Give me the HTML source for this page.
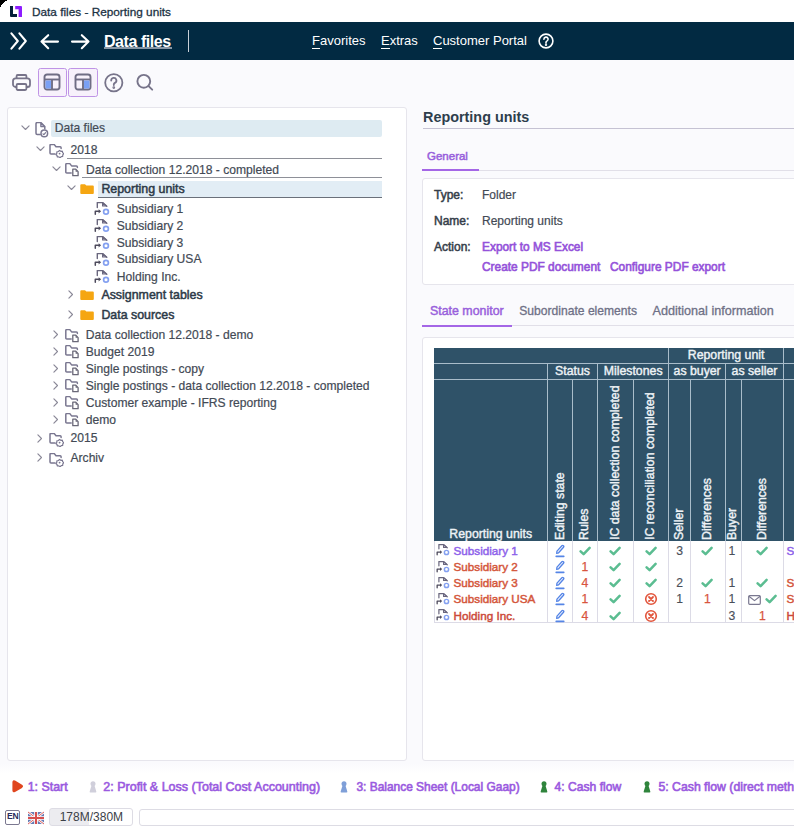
<!DOCTYPE html>
<html><head><meta charset="utf-8">
<style>
*{box-sizing:border-box;margin:0;padding:0}
html,body{width:794px;height:832px;overflow:hidden;background:#000}
body{font-family:"Liberation Sans",sans-serif;position:relative}
#win{position:absolute;left:0;top:0;width:794px;height:832px;background:#fafafd;overflow:hidden}
.a{position:absolute;white-space:nowrap}
svg{position:absolute;overflow:visible}
#titlebar{left:0;top:0;width:794px;height:22px;background:#fff}
#nav{left:0;top:22px;width:794px;height:38px;background:#022a42}
.navt{color:#fff;font-size:13px;line-height:16px;top:33px}
.navt u{text-decoration:none;border-bottom:1px solid #fff}
.panel{background:#fff;border:1px solid #e6e5ec;border-radius:3px}
.m{-webkit-text-stroke:0.3px currentColor}
.tr{font-size:12.1px;color:#434a55;-webkit-text-stroke:0.2px currentColor;line-height:17px;height:17px}
.trb{font-size:12.4px;color:#2d3a48;-webkit-text-stroke:0.5px currentColor;line-height:17px;height:17px}
.hl{background:#deebf2}
.ul{border-bottom:1px solid #7c8088}
.lbl{font-size:12px;color:#363e4a;-webkit-text-stroke:0.5px currentColor}
.val{font-size:12px;color:#434a55;-webkit-text-stroke:0.2px currentColor}
.lnk{font-size:11.9px;color:#9452da;-webkit-text-stroke:0.6px currentColor}
.tab{font-size:12.4px;color:#6e7086;-webkit-text-stroke:0.3px currentColor}
.th{background:#2f5268;color:#eef3f6;font-size:12.3px;-webkit-text-stroke:0.4px currentColor}
.vl{position:absolute;width:1px;background:#a9bdca}
.hln{position:absolute;height:1px;background:#a9bdca}
.rot{position:absolute;transform-origin:0 0;transform:rotate(-90deg);font-size:12.3px;color:#eef3f6;white-space:nowrap;line-height:14px;-webkit-text-stroke:0.4px currentColor}
.cell{position:absolute;font-size:12px;line-height:16px;text-align:center}
.red{color:#d6502f}
.stat{font-size:12.5px;color:#9a5ae0;-webkit-text-stroke:0.6px currentColor;line-height:14px;top:779.6px}
</style></head><body>
<div id="win">
<svg width="0" height="0" style="position:absolute">
<defs>
<symbol id="chd" viewBox="0 0 10 6"><path d="M1 1L5 5L9 1" fill="none" stroke="#8c8a99" stroke-width="1.3" stroke-linecap="round" stroke-linejoin="round"/></symbol>
<symbol id="chr" viewBox="0 0 6 10"><path d="M1 1L5 5L1 9" fill="none" stroke="#8c8a99" stroke-width="1.3" stroke-linecap="round" stroke-linejoin="round"/></symbol>
<symbol id="idoc" viewBox="0 0 14 16"><g fill="none" stroke="#7a7790" stroke-width="1.5" stroke-linejoin="round" stroke-linecap="round"><path d="M5.2 12.4H2.2Q1 12.4 1 11.2V1.7Q1 0.5 2.2 0.5H5.8L9.8 4.6V6.8"/><path d="M5.8 0.8V4.6H9.6z" fill="#c9c6dc" stroke-width="1.2"/><circle cx="9.3" cy="11.4" r="3.3" fill="#fff"/><path d="M8 11.9l0.9 0.8 1.7-2" stroke-width="1.2"/></g></symbol>
<symbol id="ifg" viewBox="0 0 15 14"><g fill="none" stroke="#7a7790" stroke-width="1.5" stroke-linejoin="round" stroke-linecap="round"><path d="M6 10H2Q1 10 1 9V1.4Q1 0.4 2 0.4H5.1L7 2.8H11.2Q12.1 2.8 12.1 3.7V4.5"/><path d="M10.6 6.4l1.2 0.9 1.5-0.1 0.4 1.5 1 1-0.9 1.2-0.1 1.5-1.5 0.3-1 1-1.3-0.8-1.5 0.1-0.4-1.5-1.1-1 0.9-1.2 0.1-1.5 1.5-0.3z" fill="#fff" stroke-width="1.2"/><circle cx="10.6" cy="9.6" r="0.9" fill="#7a7790" stroke="none"/></g></symbol>
<symbol id="ifd" viewBox="0 0 15 14"><g fill="none" stroke="#7a7790" stroke-width="1.5" stroke-linejoin="round" stroke-linecap="round"><path d="M6.2 10H1.8Q0.8 10 0.8 9V1.6Q0.8 0.6 1.8 0.6H4.8L6.6 2.9H11.4Q12.4 2.9 12.4 3.9V4.4"/><path d="M7.8 12.7V6.2H10.8L13.1 8.6V12.7z" fill="#fff" stroke="#6a6878" stroke-width="1.3"/><path d="M10.6 6.4L12.9 8.8H10.6z" fill="#6a6878" stroke="none"/></g></symbol>
<symbol id="ifo" viewBox="0 0 14 10"><path d="M0.3 1.2Q0.3 0.2 1.3 0.2H5l1.3 1.3h6.5q1 0 1 1V9q0 1-1 1H1.3q-1 0-1-1z" fill="#f5a612"/></symbol>
<symbol id="iun" viewBox="0 0 16 15"><g fill="none" stroke-linejoin="round" stroke-linecap="round" stroke-width="1.4"><path d="M3.3 5.5V0.6H8.6L12.8 4.3" stroke="#6a677e"/><path d="M8.6 0.8V4H12.4z" fill="#c8c6da" stroke="#6a677e" stroke-width="1.2"/><path d="M1.3 12.3V9.3H5" stroke="#4d4a5c" stroke-width="1.5"/><path d="M4.6 7.2L7.1 9.3L4.6 11.4z" fill="#4d4a5c" stroke="none"/><circle cx="12" cy="9.7" r="2.4" stroke="#84a0f0" stroke-width="1.7"/></g></symbol>
<symbol id="chk" viewBox="0 0 12 10"><path d="M1.6 5.3L4.6 8.2L10.6 1.8" fill="none" stroke="#5bbd91" stroke-width="2.5" stroke-linecap="round" stroke-linejoin="round"/></symbol>
<symbol id="pen" viewBox="0 0 10 14"><g fill="none" stroke="#5585e6" stroke-linejoin="round" stroke-linecap="round"><path d="M1.7 9.3L2 7.1L6.9 1.7Q7.6 1 8.4 1.7Q9.2 2.4 8.5 3.2L3.6 8.8z" stroke-width="1.35"/><path d="M1.2 12.4h7.6" stroke-width="1.6"/></g></symbol>
<symbol id="xci" viewBox="0 0 14 14"><g fill="none" stroke="#e2553c" stroke-width="1.6" stroke-linecap="round"><circle cx="7" cy="7" r="5.3"/><path d="M5 5l4 4M9 5l-4 4" stroke-width="1.8"/></g></symbol>
<symbol id="env" viewBox="0 0 13 10"><g fill="none" stroke="#7a7890" stroke-width="1.2" stroke-linejoin="round"><rect x="0.7" y="0.7" width="11.6" height="8.6" rx="1"/><path d="M0.9 1.2l5.6 4.4 5.6-4.4"/></g></symbol>
<symbol id="pawn" viewBox="0 0 8 12"><circle cx="4" cy="2.7" r="2.5" fill="currentColor"/><path d="M2.5 4.6H5.5L7.3 10.4Q7.6 11.4 6.6 11.4H1.4Q0.4 11.4 0.7 10.4z" fill="currentColor"/></symbol>
</defs></svg>
<!-- title bar -->
<div class="a" id="titlebar"></div>
<svg style="left:0;top:0" width="8" height="8" shape-rendering="crispEdges"><path d="M0 0h7v1H5v1H4v1H3v1H2v1H1v2H0z" fill="#000"/></svg>
<svg style="left:10px;top:6px" width="13" height="11" viewBox="0 0 13 11">
 <path d="M0 0h3v8h4v3H1Q0 11 0 10z" fill="#021f38"/>
 <path d="M5.2 0H11Q12 0 12 1V11H8.6V3.2H5.2z" fill="#8d1cff"/>
</svg>
<div class="a" style="left:32px;top:4px;font-size:11.8px;line-height:16px;color:#1c3244;-webkit-text-stroke:0.3px currentColor">Data files - Reporting units</div>

<!-- nav -->
<div class="a" id="nav"></div>
<svg style="left:9.5px;top:32px" width="18" height="18" viewBox="0 0 18 18" fill="none" stroke="#fff" stroke-width="2.1" stroke-linecap="round" stroke-linejoin="round">
 <path d="M1.4 1.4L7.8 9L1.4 16.6M9.4 1.4L15.8 9L9.4 16.6"/>
</svg>
<svg style="left:40px;top:34px" width="19" height="16" viewBox="0 0 19 16" fill="none" stroke="#fff" stroke-width="2.1" stroke-linecap="round" stroke-linejoin="round">
 <path d="M18 7.6H2M8.2 1.2L1.5 7.6L8.2 14.2"/>
</svg>
<svg style="left:71px;top:34px" width="19" height="16" viewBox="0 0 19 16" fill="none" stroke="#fff" stroke-width="2.1" stroke-linecap="round" stroke-linejoin="round">
 <path d="M1 7.6H17M10.8 1.2L17.5 7.6L10.8 14.2"/>
</svg>
<div class="a" style="left:104px;top:32.5px;font-size:16px;font-weight:bold;color:#fff;line-height:18px;letter-spacing:-0.45px">Data files</div>
<div class="a" style="left:104px;top:47.2px;width:67.5px;height:2px;background:#8797a6"></div>
<div class="a" style="left:187.9px;top:30px;width:1.2px;height:22px;background:#c8d0d8"></div>
<div class="a navt" style="left:312px"><u>F</u>avorites</div>
<div class="a navt" style="left:381px"><u>E</u>xtras</div>
<div class="a navt" style="left:433px"><u>C</u>ustomer Portal</div>
<svg style="left:538px;top:33px" width="16" height="16" viewBox="0 0 16 16" fill="none" stroke="#fff" stroke-width="1.6">
 <circle cx="8" cy="8" r="6.9"/>
 <path d="M5.9 6.2a2.1 2.1 0 1 1 3 1.9c-.6.3-.9.7-.9 1.3v.5" stroke-linecap="round"/>
 <circle cx="8" cy="11.8" r=".4" fill="#fff"/>
</svg>

<!-- toolbar -->
<svg style="left:12px;top:74px" width="19" height="17" viewBox="0 0 19 17" fill="none" stroke="#77748a" stroke-width="1.8" stroke-linejoin="round">
 <rect x="4.6" y="1" width="9.8" height="4" rx="1"/>
 <rect x="1" y="4.4" width="17" height="8.6" rx="2.6" fill="#fafafd"/>
 <rect x="4.6" y="10" width="9.8" height="6" rx="1.2" fill="#fff"/>
</svg>
<div class="a" style="left:37.5px;top:67.5px;width:29px;height:29px;border:1.3px solid #bf94e6;border-radius:2.5px;background:#f7f1fb"></div>
<svg style="left:43px;top:73px" width="18" height="18" viewBox="0 0 18 18">
 <rect x="1.5" y="1.5" width="15" height="15" rx="2.5" fill="none" stroke="#6f6d84" stroke-width="1.9"/>
 <path d="M1.5 6.5h15" stroke="#6f6d84" stroke-width="1.9"/>
 <path d="M9 6.5v10" stroke="#6f6d84" stroke-width="1.9"/>
 <rect x="2.5" y="7.5" width="5.5" height="8" fill="#7aa0f5"/>
</svg>
<div class="a" style="left:68px;top:67.5px;width:30px;height:29px;border:1.3px solid #bf94e6;border-radius:2.5px;background:#f7f1fb"></div>
<svg style="left:74px;top:73px" width="18" height="18" viewBox="0 0 18 18">
 <rect x="1.5" y="1.5" width="15" height="15" rx="2.5" fill="none" stroke="#6f6d84" stroke-width="1.9"/>
 <path d="M1.5 6.5h15" stroke="#6f6d84" stroke-width="1.9"/>
 <path d="M9 6.5v10" stroke="#6f6d84" stroke-width="1.9"/>
 <rect x="10" y="7.5" width="5.5" height="8" fill="#7aa0f5"/>
</svg>
<svg style="left:104px;top:73px" width="20" height="20" viewBox="0 0 20 20" fill="none" stroke="#77748a" stroke-width="1.8">
 <circle cx="9.8" cy="9.8" r="8.6"/>
 <path d="M7.2 7.6a2.6 2.6 0 1 1 3.7 2.3c-.7.4-1.1.9-1.1 1.6v.6" stroke-linecap="round"/>
 <circle cx="9.8" cy="14.6" r=".5" fill="#77748a"/>
</svg>
<svg style="left:136px;top:74px" width="18" height="18" viewBox="0 0 18 18" fill="none" stroke="#77748a" stroke-width="1.9" stroke-linecap="round">
 <circle cx="7.8" cy="7.3" r="6.4"/>
 <path d="M12.6 12.1l3.6 3.6"/>
</svg>

<!-- left panel -->
<div class="a panel" style="left:6.5px;top:106.5px;width:400.5px;height:654.5px"></div>
<div class="a hl" style="left:51px;top:120px;width:331px;height:17px;border-radius:2px"></div>
<div class="a" style="left:66.7px;top:158px;width:315.3px;height:1px;background:#8e9098"></div>
<div class="a" style="left:82px;top:177px;width:300px;height:1px;background:#8e9098"></div>
<div class="a hl" style="left:97.8px;top:180.5px;width:284.2px;height:17px;border-bottom:1px solid #6a707a;background:#e2edf5"></div>
<svg style="left:21px;top:124.8px" width="9" height="5.4"><use href="#chd"/></svg>
<svg style="left:35px;top:121.5px" width="14" height="16"><use href="#idoc"/></svg>
<div class="a tr" style="left:54.7px;top:120.3px">Data files</div>
<svg style="left:36px;top:146.0px" width="9" height="5.4"><use href="#chd"/></svg>
<svg style="left:49px;top:144.0px" width="15" height="14"><use href="#ifg"/></svg>
<div class="a tr" style="left:70.5px;top:141.5px">2018</div>
<svg style="left:51.5px;top:166.0px" width="9" height="5.4"><use href="#chd"/></svg>
<svg style="left:64.5px;top:163.39999999999998px" width="15" height="14"><use href="#ifd"/></svg>
<div class="a tr" style="left:86px;top:161.5px">Data collection 12.2018 - completed</div>
<svg style="left:67px;top:185.3px" width="9" height="5.4"><use href="#chd"/></svg>
<svg style="left:80px;top:183.5px" width="14" height="10"><use href="#ifo"/></svg>
<div class="a trb" style="left:101.4px;top:180.8px">Reporting units</div>
<svg style="left:94px;top:202.10000000000002px" width="16" height="15"><use href="#iun"/></svg>
<div class="a tr" style="left:116.8px;top:200.60000000000002px">Subsidiary 1</div>
<svg style="left:94px;top:219.10000000000002px" width="16" height="15"><use href="#iun"/></svg>
<div class="a tr" style="left:116.8px;top:217.60000000000002px">Subsidiary 2</div>
<svg style="left:94px;top:236.10000000000002px" width="16" height="15"><use href="#iun"/></svg>
<div class="a tr" style="left:116.8px;top:234.60000000000002px">Subsidiary 3</div>
<svg style="left:94px;top:252.90000000000003px" width="16" height="15"><use href="#iun"/></svg>
<div class="a tr" style="left:116.8px;top:251.40000000000003px">Subsidiary USA</div>
<svg style="left:94px;top:270.0px" width="16" height="15"><use href="#iun"/></svg>
<div class="a tr" style="left:116.8px;top:268.5px">Holding Inc.</div>
<svg style="left:68.4px;top:290.3px" width="5.4" height="9"><use href="#chr"/></svg>
<svg style="left:80px;top:289.8px" width="14" height="10"><use href="#ifo"/></svg>
<div class="a trb" style="left:101.4px;top:287.1px">Assignment tables</div>
<svg style="left:68.4px;top:310.1px" width="5.4" height="9"><use href="#chr"/></svg>
<svg style="left:80px;top:309.6px" width="14" height="10"><use href="#ifo"/></svg>
<div class="a trb" style="left:101.4px;top:306.90000000000003px">Data sources</div>
<svg style="left:52.699999999999996px;top:329.9px" width="5.4" height="9"><use href="#chr"/></svg>
<svg style="left:64.5px;top:328.59999999999997px" width="15" height="14"><use href="#ifd"/></svg>
<div class="a tr" style="left:85.8px;top:326.7px">Data collection 12.2018 - demo</div>
<svg style="left:52.699999999999996px;top:346.7px" width="5.4" height="9"><use href="#chr"/></svg>
<svg style="left:64.5px;top:345.4px" width="15" height="14"><use href="#ifd"/></svg>
<div class="a tr" style="left:85.8px;top:343.5px">Budget 2019</div>
<svg style="left:52.699999999999996px;top:363.7px" width="5.4" height="9"><use href="#chr"/></svg>
<svg style="left:64.5px;top:362.4px" width="15" height="14"><use href="#ifd"/></svg>
<div class="a tr" style="left:85.8px;top:360.5px">Single postings - copy</div>
<svg style="left:52.699999999999996px;top:380.7px" width="5.4" height="9"><use href="#chr"/></svg>
<svg style="left:64.5px;top:379.4px" width="15" height="14"><use href="#ifd"/></svg>
<div class="a tr" style="left:85.8px;top:377.5px">Single postings - data collection 12.2018 - completed</div>
<svg style="left:52.699999999999996px;top:397.7px" width="5.4" height="9"><use href="#chr"/></svg>
<svg style="left:64.5px;top:396.4px" width="15" height="14"><use href="#ifd"/></svg>
<div class="a tr" style="left:85.8px;top:394.5px">Customer example - IFRS reporting</div>
<svg style="left:52.699999999999996px;top:414.7px" width="5.4" height="9"><use href="#chr"/></svg>
<svg style="left:64.5px;top:413.4px" width="15" height="14"><use href="#ifd"/></svg>
<div class="a tr" style="left:85.8px;top:411.5px">demo</div>
<svg style="left:37.4px;top:433.5px" width="5.4" height="9"><use href="#chr"/></svg>
<svg style="left:49px;top:432.8px" width="15" height="14"><use href="#ifg"/></svg>
<div class="a tr" style="left:70.5px;top:430.3px">2015</div>
<svg style="left:37.4px;top:453.3px" width="5.4" height="9"><use href="#chr"/></svg>
<svg style="left:49px;top:452.6px" width="15" height="14"><use href="#ifg"/></svg>
<div class="a tr" style="left:70.5px;top:450.1px">Archiv</div>

<!-- right panel -->
<div class="a" style="left:423px;top:108px;font-size:14.4px;font-weight:bold;color:#2e3e4c;line-height:18px">Reporting units</div>
<div class="a" style="left:422.5px;top:128px;width:380px;height:1.3px;background:#c5c2d3"></div>
<div class="a tab" style="left:427px;top:148px;line-height:16px;font-size:11.5px;color:#9860dc;-webkit-text-stroke:0.5px currentColor">General</div>
<div class="a" style="left:422.5px;top:169.5px;width:380px;height:1px;background:#e1dfe8"></div>
<div class="a" style="left:422px;top:169px;width:56.5px;height:2px;background:#a466e6"></div>
<div class="a panel" style="left:422px;top:178px;width:380px;height:107px;background:#fff"></div>
<div class="a lbl" style="left:434px;top:187px;line-height:16px">Type:</div>
<div class="a val" style="left:482px;top:187px;line-height:16px">Folder</div>
<div class="a lbl" style="left:434px;top:213px;line-height:16px">Name:</div>
<div class="a val" style="left:482px;top:213px;line-height:16px">Reporting units</div>
<div class="a lbl" style="left:434px;top:239px;line-height:16px">Action:</div>
<div class="a lnk" style="left:482px;top:239px;line-height:16px">Export to MS Excel</div>
<div class="a lnk" style="left:482px;top:258.5px;line-height:16px">Create PDF document</div>
<div class="a lnk" style="left:610px;top:258.5px;line-height:16px">Configure PDF export</div>

<div class="a tab" style="left:430px;top:303px;line-height:16px;color:#9860dc;-webkit-text-stroke:0.45px currentColor">State monitor</div>
<div class="a tab" style="left:519.3px;top:303px;line-height:16px;font-size:12.1px">Subordinate elements</div>
<div class="a tab" style="left:652.6px;top:303px;line-height:16px;font-size:12.6px">Additional information</div>
<div class="a" style="left:422.5px;top:325px;width:380px;height:1px;background:#e1dfe8"></div>
<div class="a" style="left:422px;top:325px;width:89.5px;height:2px;background:#a466e6"></div>
<div class="a panel" style="left:422px;top:337px;width:380px;height:424px"></div>
<div class="a th" style="left:433.8px;top:348px;width:396.2px;height:193.20000000000005px"></div>
<div class="hln" style="left:433.8px;top:363.2px;width:396.2px"></div>
<div class="hln" style="left:433.8px;top:379px;width:396.2px"></div>
<div class="vl" style="left:668px;top:348px;height:15.199999999999989px"></div>
<div class="vl" style="left:783px;top:348px;height:15.199999999999989px"></div>
<div class="vl" style="left:547px;top:363.2px;height:15.800000000000011px"></div>
<div class="vl" style="left:597px;top:363.2px;height:15.800000000000011px"></div>
<div class="vl" style="left:668px;top:363.2px;height:15.800000000000011px"></div>
<div class="vl" style="left:725px;top:363.2px;height:15.800000000000011px"></div>
<div class="vl" style="left:783px;top:363.2px;height:15.800000000000011px"></div>
<div class="vl" style="left:547px;top:379px;height:162.20000000000005px"></div>
<div class="vl" style="left:572px;top:379px;height:162.20000000000005px"></div>
<div class="vl" style="left:597px;top:379px;height:162.20000000000005px"></div>
<div class="vl" style="left:633px;top:379px;height:162.20000000000005px"></div>
<div class="vl" style="left:668px;top:379px;height:162.20000000000005px"></div>
<div class="vl" style="left:690px;top:379px;height:162.20000000000005px"></div>
<div class="vl" style="left:725px;top:379px;height:162.20000000000005px"></div>
<div class="vl" style="left:741px;top:379px;height:162.20000000000005px"></div>
<div class="vl" style="left:783px;top:379px;height:162.20000000000005px"></div>
<div class="a th" style="background:none;left:668.8px;width:114.60000000000002px;top:347.3px;line-height:16px;text-align:center">Reporting unit</div>
<div class="a th" style="background:none;left:547.6px;width:49.89999999999998px;top:363.3px;line-height:16px;text-align:center">Status</div>
<div class="a th" style="background:none;left:597.5px;width:71.29999999999995px;top:363.3px;line-height:16px;text-align:center">Milestones</div>
<div class="a th" style="background:none;left:668.8px;width:56.700000000000045px;top:363.3px;line-height:16px;text-align:center">as buyer</div>
<div class="a th" style="background:none;left:725.5px;width:57.89999999999998px;top:363.3px;line-height:16px;text-align:center">as seller</div>
<div class="a th" style="background:none;left:433.8px;width:113.80000000000001px;top:525.5px;line-height:16px;text-align:center">Reporting units</div>
<div class="rot" style="left:552.7px;top:540px">Editing state</div>
<div class="rot" style="left:576.6px;top:540px">Rules</div>
<div class="rot" style="left:607.8px;top:540px">IC data collection completed</div>
<div class="rot" style="left:643.2px;top:540px">IC reconciliation completed</div>
<div class="rot" style="left:671.6px;top:540px">Seller</div>
<div class="rot" style="left:699.8px;top:540px">Differences</div>
<div class="rot" style="left:724.5px;top:540px">Buyer</div>
<div class="rot" style="left:754.7px;top:540px">Differences</div>
<div class="a" style="left:433.8px;top:541.2px;width:396.2px;height:81.79999999999995px;background:#fff;border-left:1px solid #dcdbe6;border-bottom:1px solid #dcdbe6"></div>
<div class="vl" style="left:547px;top:541.2px;height:81.79999999999995px;background:#dcdbe6"></div>
<div class="vl" style="left:572px;top:541.2px;height:81.79999999999995px;background:#dcdbe6"></div>
<div class="vl" style="left:597px;top:541.2px;height:81.79999999999995px;background:#dcdbe6"></div>
<div class="vl" style="left:633px;top:541.2px;height:81.79999999999995px;background:#dcdbe6"></div>
<div class="vl" style="left:668px;top:541.2px;height:81.79999999999995px;background:#dcdbe6"></div>
<div class="vl" style="left:690px;top:541.2px;height:81.79999999999995px;background:#dcdbe6"></div>
<div class="vl" style="left:725px;top:541.2px;height:81.79999999999995px;background:#dcdbe6"></div>
<div class="vl" style="left:741px;top:541.2px;height:81.79999999999995px;background:#dcdbe6"></div>
<div class="vl" style="left:783px;top:541.2px;height:81.79999999999995px;background:#dcdbe6"></div>
<svg style="left:436.2px;top:544.4px" width="14" height="13.1"><use href="#iun"/></svg>
<div class="a" style="left:453.5px;top:543px;line-height:16px;font-size:11.7px;-webkit-text-stroke:0.45px currentColor;color:#8e62ea">Subsidiary 1</div>
<svg style="left:554.7px;top:544px" width="10" height="14"><use href="#pen"/></svg>
<svg style="left:578.9px;top:546px" width="12" height="10"><use href="#chk"/></svg>
<svg style="left:609.4px;top:546px" width="12" height="10"><use href="#chk"/></svg>
<svg style="left:644.7px;top:546px" width="12" height="10"><use href="#chk"/></svg>
<div class="a" style="left:669.6px;width:20px;text-align:center;top:543px;line-height:16px;font-size:12.2px;color:#4a4f5a;-webkit-text-stroke:0.15px currentColor">3</div>
<svg style="left:701.3px;top:546px" width="12" height="10"><use href="#chk"/></svg>
<div class="a" style="left:722px;width:20px;text-align:center;top:543px;line-height:16px;font-size:12.2px;color:#4a4f5a;-webkit-text-stroke:0.15px currentColor">1</div>
<svg style="left:756.3px;top:546px" width="12" height="10"><use href="#chk"/></svg>
<div class="a" style="left:786.5px;top:543px;line-height:16px;font-size:11.7px;-webkit-text-stroke:0.45px currentColor;color:#8e62ea">S</div>
<svg style="left:436.2px;top:560.6999999999999px" width="14" height="13.1"><use href="#iun"/></svg>
<div class="a" style="left:453.5px;top:559.3px;line-height:16px;font-size:11.7px;-webkit-text-stroke:0.45px currentColor;color:#d4563b">Subsidiary 2</div>
<svg style="left:554.7px;top:560.3px" width="10" height="14"><use href="#pen"/></svg>
<div class="a" style="left:574.9px;width:20px;text-align:center;top:559.3px;line-height:16px;font-size:12.2px;-webkit-text-stroke:0.25px currentColor;color:#d8553e">1</div>
<svg style="left:609.4px;top:562.3px" width="12" height="10"><use href="#chk"/></svg>
<svg style="left:644.7px;top:562.3px" width="12" height="10"><use href="#chk"/></svg>
<svg style="left:436.2px;top:576.6999999999999px" width="14" height="13.1"><use href="#iun"/></svg>
<div class="a" style="left:453.5px;top:575.3px;line-height:16px;font-size:11.7px;-webkit-text-stroke:0.45px currentColor;color:#d4563b">Subsidiary 3</div>
<svg style="left:554.7px;top:576.3px" width="10" height="14"><use href="#pen"/></svg>
<div class="a" style="left:574.9px;width:20px;text-align:center;top:575.3px;line-height:16px;font-size:12.2px;-webkit-text-stroke:0.25px currentColor;color:#d8553e">4</div>
<svg style="left:609.4px;top:578.3px" width="12" height="10"><use href="#chk"/></svg>
<svg style="left:644.7px;top:578.3px" width="12" height="10"><use href="#chk"/></svg>
<div class="a" style="left:669.6px;width:20px;text-align:center;top:575.3px;line-height:16px;font-size:12.2px;color:#4a4f5a;-webkit-text-stroke:0.15px currentColor">2</div>
<svg style="left:701.3px;top:578.3px" width="12" height="10"><use href="#chk"/></svg>
<div class="a" style="left:722px;width:20px;text-align:center;top:575.3px;line-height:16px;font-size:12.2px;color:#4a4f5a;-webkit-text-stroke:0.15px currentColor">1</div>
<svg style="left:756.3px;top:578.3px" width="12" height="10"><use href="#chk"/></svg>
<div class="a" style="left:786.5px;top:575.3px;line-height:16px;font-size:11.7px;-webkit-text-stroke:0.45px currentColor;color:#d4563b">S</div>
<svg style="left:436.2px;top:592.8px" width="14" height="13.1"><use href="#iun"/></svg>
<div class="a" style="left:453.5px;top:591.4px;line-height:16px;font-size:11.7px;-webkit-text-stroke:0.45px currentColor;color:#d4563b">Subsidiary USA</div>
<svg style="left:554.7px;top:592.4px" width="10" height="14"><use href="#pen"/></svg>
<div class="a" style="left:574.9px;width:20px;text-align:center;top:591.4px;line-height:16px;font-size:12.2px;-webkit-text-stroke:0.25px currentColor;color:#d8553e">1</div>
<svg style="left:609.4px;top:594.4px" width="12" height="10"><use href="#chk"/></svg>
<svg style="left:643.7px;top:592.4px" width="14" height="14"><use href="#xci"/></svg>
<div class="a" style="left:669.6px;width:20px;text-align:center;top:591.4px;line-height:16px;font-size:12.2px;color:#4a4f5a;-webkit-text-stroke:0.15px currentColor">1</div>
<div class="a" style="left:697.3px;width:20px;text-align:center;top:591.4px;line-height:16px;font-size:12.2px;-webkit-text-stroke:0.25px currentColor;color:#d8553e">1</div>
<div class="a" style="left:722px;width:20px;text-align:center;top:591.4px;line-height:16px;font-size:12.2px;color:#4a4f5a;-webkit-text-stroke:0.15px currentColor">1</div>
<svg style="left:748px;top:594.9px" width="13" height="10"><use href="#env"/></svg>
<svg style="left:764.5px;top:594.4px" width="12" height="10"><use href="#chk"/></svg>
<div class="a" style="left:786.5px;top:591.4px;line-height:16px;font-size:11.7px;-webkit-text-stroke:0.45px currentColor;color:#d4563b">S</div>
<svg style="left:436.2px;top:609.1999999999999px" width="14" height="13.1"><use href="#iun"/></svg>
<div class="a" style="left:453.5px;top:607.8px;line-height:16px;font-size:11.7px;-webkit-text-stroke:0.45px currentColor;color:#cc4a3a">Holding Inc.</div>
<svg style="left:554.7px;top:608.8px" width="10" height="14"><use href="#pen"/></svg>
<div class="a" style="left:574.9px;width:20px;text-align:center;top:607.8px;line-height:16px;font-size:12.2px;-webkit-text-stroke:0.25px currentColor;color:#d8553e">4</div>
<svg style="left:609.4px;top:610.8px" width="12" height="10"><use href="#chk"/></svg>
<svg style="left:643.7px;top:608.8px" width="14" height="14"><use href="#xci"/></svg>
<div class="a" style="left:722px;width:20px;text-align:center;top:607.8px;line-height:16px;font-size:12.2px;color:#4a4f5a;-webkit-text-stroke:0.15px currentColor">3</div>
<div class="a" style="left:752.3px;width:20px;text-align:center;top:607.8px;line-height:16px;font-size:12.2px;-webkit-text-stroke:0.25px currentColor;color:#d8553e">1</div>
<div class="a" style="left:786.5px;top:607.8px;line-height:16px;font-size:11.7px;-webkit-text-stroke:0.45px currentColor;color:#cc4a3a">H</div>

<!-- status row -->
<div class="a" style="left:0;top:763px;width:794px;height:69px;background:linear-gradient(#fafafd 0,#fff 10px)"></div>
<svg style="left:11px;top:780px" width="12" height="13"><path d="M2.2 2.2Q2.2 0.6 3.6 1.3L10.6 5.4Q11.9 6.3 10.6 7.2L3.6 11.3Q2.2 12 2.2 10.4z" fill="#e0461f" stroke="#e0461f" stroke-width="1.6" stroke-linejoin="round"/></svg>
<div class="a stat" style="left:27.7px;font-size:12.4px">1: Start</div>
<svg style="left:88.5px;top:780.5px;color:#d0cfdb" width="8" height="12"><use href="#pawn"/></svg>
<div class="a stat" style="left:103.3px">2: Profit &amp; Loss (Total Cost Accounting)</div>
<svg style="left:340px;top:780.5px;color:#7f9fd8" width="8" height="12"><use href="#pawn"/></svg>
<div class="a stat" style="left:356.4px;font-size:11.95px">3: Balance Sheet (Local Gaap)</div>
<svg style="left:539.5px;top:780.5px;color:#2f843c" width="8" height="12"><use href="#pawn"/></svg>
<div class="a stat" style="left:554.6px;font-size:12.1px">4: Cash flow</div>
<svg style="left:643px;top:780.5px;color:#2f843c" width="8" height="12"><use href="#pawn"/></svg>
<div class="a stat" style="left:658.5px;font-size:12.25px">5: Cash flow (direct method)</div>
<!-- bottom bar -->
<div class="a" style="left:5px;top:810px;width:15.3px;height:15px;border:1.7px solid #7b7890;border-radius:2px;background:#fff;font-size:8.6px;font-weight:bold;color:#2b2d5a;line-height:11.8px;text-align:center;letter-spacing:-0.3px">EN</div>
<svg style="left:28.3px;top:811.6px;opacity:0.85" width="16" height="12" viewBox="0 0 16 12"><rect width="16" height="12" fill="#4a64a8"/><path d="M0 0L16 12M16 0L0 12" stroke="#fff" stroke-width="2.4"/><path d="M0 0L16 12M16 0L0 12" stroke="#d03030" stroke-width="0.9"/><path d="M8 0V12M0 6H16" stroke="#fff" stroke-width="3.6"/><path d="M8 0V12M0 6H16" stroke="#d03030" stroke-width="2"/></svg>
<div class="a" style="left:49px;top:808.4px;width:84px;height:17.4px;border:1px solid #dddce4;border-radius:3px;background:linear-gradient(90deg,#ececf0 0,#ececf0 47%,#fff 47%)"></div>
<div class="a" style="left:59.7px;top:809px;font-size:12px;line-height:16px;color:#3b3f47">178M/380M</div>
<div class="a" style="left:138.5px;top:808.6px;width:700px;height:17.6px;border:1px solid #dddce4;border-radius:3px;background:#fff"></div>
</div>
</body></html>
